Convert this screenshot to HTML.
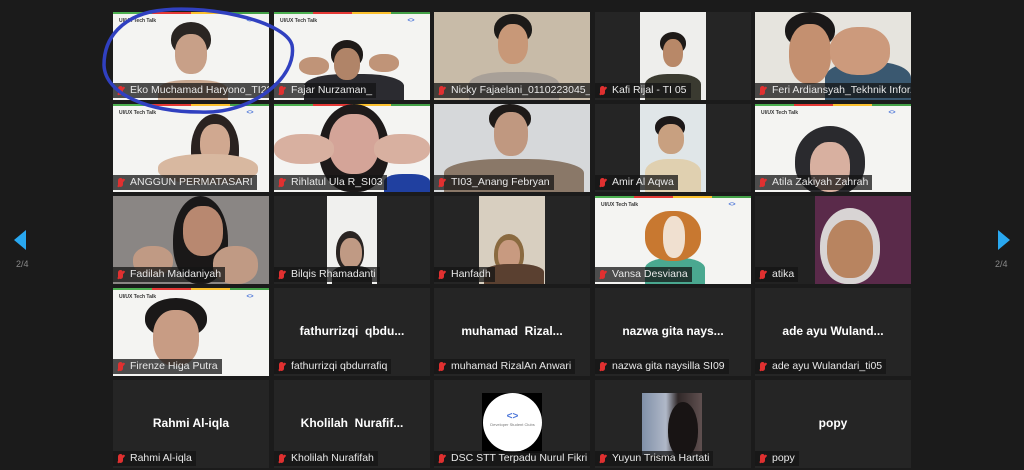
<!DOCTYPE html>
<html><head><meta charset="utf-8"><style>
*{margin:0;padding:0;box-sizing:border-box}
body{width:1024px;height:470px;background:#1b1b1b;overflow:hidden;position:relative;font-family:"Liberation Sans",sans-serif}
.t{position:absolute;width:156px;height:88px;background:#252525;overflow:hidden}
.wb{background:#f4f4f2}
.wb::before{content:"";position:absolute;left:0;right:0;top:0;height:2px;background:linear-gradient(90deg,#4caf50 0 25%,#e53935 25% 50%,#fbc02d 50% 75%,#43a047 75%)}
.tt{position:absolute;left:6px;top:6px;font-size:5px;font-weight:bold;color:#333}
.lg{position:absolute;right:8px;top:6px;width:22px;height:8px;font-size:6px;color:#4a74d8;text-align:center;font-weight:bold}
.lb{position:absolute;left:0;bottom:2px;height:15px;background:rgba(20,20,20,.75);color:#e8e8e8;font-size:10.5px;line-height:15px;padding:0 4px 0 17px;white-space:nowrap}
.lb::before{content:"";position:absolute;left:5px;top:3px;width:5px;height:9px;background:#e03030;border-radius:3px}
.lb::after{content:"";position:absolute;left:3px;top:7px;width:10px;height:1.5px;background:#e03030;transform:rotate(-50deg)}
.nm{position:absolute;left:0;right:0;top:36px;text-align:center;color:#fff;font-weight:bold;font-size:12px}
.h{position:absolute;border-radius:50% 50% 45% 45%}
.f{position:absolute;border-radius:45%}
.b{position:absolute;border-radius:40% 40% 0 0}
.v{position:absolute}
.arr{position:absolute;width:0;height:0;border-top:10px solid transparent;border-bottom:10px solid transparent}
.pg{position:absolute;color:#888;font-size:9px}
</style></head><body>
<div class="arr" style="left:14px;top:230px;border-right:12px solid #29a8f0"></div>
<div class="pg" style="left:16px;top:259px">2/4</div>
<div class="arr" style="left:998px;top:230px;border-left:12px solid #29a8f0"></div>
<div class="pg" style="left:995px;top:259px">2/4</div>

<!-- Row 1 -->
<div class="t wb" style="left:113px;top:12px"><div class="tt">UI/UX Tech Talk</div><div class="lg">&lt;&gt;</div>
<div class="b" style="left:45px;top:68px;width:70px;height:25px;background:#c9a890"></div>
<div class="h" style="left:58px;top:10px;width:40px;height:34px;background:#2a2522"></div>
<div class="f" style="left:62px;top:22px;width:32px;height:40px;background:#c8a088"></div>
<div class="lb">Eko Muchamad Haryono_TI2?</div></div>
<div class="t wb" style="left:274px;top:12px"><div class="tt">UI/UX Tech Talk</div><div class="lg">&lt;&gt;</div>
<div class="b" style="left:30px;top:62px;width:100px;height:30px;background:#2b2b30"></div>
<div class="h" style="left:57px;top:28px;width:32px;height:28px;background:#1e1a18"></div>
<div class="f" style="left:60px;top:36px;width:26px;height:32px;background:#b08468"></div>
<div class="f" style="left:25px;top:45px;width:30px;height:18px;background:#c09478"></div>
<div class="f" style="left:95px;top:42px;width:30px;height:18px;background:#c09478"></div>
<div class="lb">Fajar Nurzaman_</div></div>
<div class="t" style="left:434px;top:12px;background:#c8bba8">
<div class="b" style="left:35px;top:60px;width:90px;height:30px;background:#a8a098"></div>
<div class="h" style="left:60px;top:2px;width:38px;height:30px;background:#1c1a18"></div>
<div class="f" style="left:64px;top:12px;width:30px;height:40px;background:#c89878"></div>
<div class="lb">Nicky Fajaelani_0110223045_...</div></div>
<div class="t" style="left:595px;top:12px"><div class="v" style="left:45px;top:0;width:66px;height:88px;background:#eeeeec"></div>
<div class="b" style="left:50px;top:62px;width:56px;height:26px;background:#3a3a30"></div>
<div class="h" style="left:65px;top:20px;width:26px;height:22px;background:#1e1a18"></div>
<div class="f" style="left:68px;top:27px;width:20px;height:28px;background:#b88868"></div>
<div class="lb">Kafi Rijal - TI 05</div></div>
<div class="t" style="left:755px;top:12px;background:#e6e4de">
<div class="b" style="left:70px;top:50px;width:86px;height:40px;background:#3a5870"></div>
<div class="h" style="left:30px;top:0;width:50px;height:36px;background:#1a1818"></div>
<div class="f" style="left:34px;top:12px;width:42px;height:60px;background:#c49070"></div>
<div class="f" style="left:75px;top:15px;width:60px;height:48px;background:#cc9a7c"></div>
<div class="lb">Feri Ardiansyah_Tekhnik Infor...</div></div>

<!-- Row 2 -->
<div class="t wb" style="left:113px;top:104px"><div class="tt">UI/UX Tech Talk</div><div class="lg">&lt;&gt;</div>
<div class="h" style="left:78px;top:10px;width:48px;height:70px;background:#2a2220"></div>
<div class="f" style="left:87px;top:20px;width:30px;height:40px;background:#d0a890"></div>
<div class="f" style="left:45px;top:50px;width:100px;height:30px;background:#d8b8a0"></div>
<div class="lb">ANGGUN PERMATASARI</div></div>
<div class="t wb" style="left:274px;top:104px">
<div class="h" style="left:45px;top:0;width:70px;height:88px;background:#1e1a1a"></div>
<div class="f" style="left:55px;top:10px;width:50px;height:60px;background:#d4a498"></div>
<div class="f" style="left:0;top:30px;width:60px;height:30px;background:#d8b0a0"></div>
<div class="f" style="left:100px;top:30px;width:56px;height:30px;background:#d8b0a0"></div>
<div class="b" style="left:110px;top:70px;width:46px;height:18px;background:#2040a0"></div>
<div class="lb">Rihlatul Ula R_SI03</div></div>
<div class="t" style="left:434px;top:104px;background:#d6d8da">
<div class="h" style="left:55px;top:0;width:42px;height:28px;background:#1e1a18"></div>
<div class="f" style="left:60px;top:8px;width:34px;height:44px;background:#c09880"></div>
<div class="b" style="left:10px;top:55px;width:140px;height:35px;background:#8a7868"></div>
<div class="lb">TI03_Anang Febryan</div></div>
<div class="t" style="left:595px;top:104px"><div class="v" style="left:45px;top:0;width:66px;height:88px;background:#e0e6e8"></div>
<div class="b" style="left:50px;top:55px;width:56px;height:33px;background:#e0d0b0"></div>
<div class="h" style="left:60px;top:12px;width:30px;height:22px;background:#1c1818"></div>
<div class="f" style="left:63px;top:20px;width:26px;height:30px;background:#c8a080"></div>
<div class="lb">Amir Al Aqwa</div></div>
<div class="t wb" style="left:755px;top:104px"><div class="tt">UI/UX Tech Talk</div><div class="lg">&lt;&gt;</div>
<div class="h" style="left:40px;top:22px;width:70px;height:70px;background:#2a2a2e"></div>
<div class="f" style="left:55px;top:38px;width:40px;height:50px;background:#d8b0a0"></div>
<div class="lb">Atila Zakiyah Zahrah</div></div>

<!-- Row 3 -->
<div class="t" style="left:113px;top:196px;background:#8a8684">
<div class="h" style="left:60px;top:0;width:55px;height:88px;background:#1a1818"></div>
<div class="f" style="left:70px;top:10px;width:40px;height:50px;background:#b88870"></div>
<div class="f" style="left:20px;top:50px;width:40px;height:30px;background:#c09a84"></div>
<div class="f" style="left:100px;top:50px;width:45px;height:38px;background:#c09a84"></div>
<div class="lb">Fadilah Maidaniyah</div></div>
<div class="t" style="left:274px;top:196px"><div class="v" style="left:53px;top:0;width:50px;height:88px;background:#f0f0ee"></div>
<div class="h" style="left:62px;top:35px;width:28px;height:40px;background:#2a2422"></div>
<div class="f" style="left:66px;top:42px;width:22px;height:30px;background:#c09a84"></div>
<div class="b" style="left:58px;top:70px;width:40px;height:18px;background:#202020"></div>
<div class="lb">Bilqis Rhamadanti</div></div>
<div class="t" style="left:434px;top:196px"><div class="v" style="left:45px;top:0;width:66px;height:88px;background:#d8cfc0"></div>
<div class="h" style="left:60px;top:38px;width:30px;height:40px;background:#8a6a40"></div>
<div class="f" style="left:64px;top:44px;width:22px;height:30px;background:#c89a80"></div>
<div class="b" style="left:50px;top:68px;width:60px;height:20px;background:#5a4030"></div>
<div class="lb">Hanfadh</div></div>
<div class="t wb" style="left:595px;top:196px"><div class="tt">UI/UX Tech Talk</div><div class="lg">&lt;&gt;</div>
<div class="b" style="left:50px;top:62px;width:60px;height:26px;background:#4aa890"></div>
<div class="f" style="left:50px;top:15px;width:56px;height:50px;background:#c87830"></div>
<div class="f" style="left:68px;top:20px;width:22px;height:42px;background:#f0e0d0"></div>
<div class="lb">Vansa Desviana</div></div>
<div class="t" style="left:755px;top:196px;background:#5a2a4a">
<div class="v" style="left:0;top:0;width:60px;height:88px;background:#222"></div>
<div class="h" style="left:65px;top:12px;width:60px;height:76px;background:#d8d4d4"></div>
<div class="f" style="left:72px;top:24px;width:46px;height:58px;background:#b88460"></div>
<div class="lb">atika</div></div>

<!-- Row 4 -->
<div class="t wb" style="left:113px;top:288px"><div class="tt">UI/UX Tech Talk</div><div class="lg">&lt;&gt;</div>
<div class="h" style="left:32px;top:10px;width:62px;height:40px;background:#1a1818"></div>
<div class="f" style="left:40px;top:22px;width:46px;height:56px;background:#c89c84"></div>
<div class="lb">Firenze Higa Putra</div></div>
<div class="t" style="left:274px;top:288px"><div class="nm">fathurrizqi&nbsp; qbdu...</div><div class="lb">fathurrizqi qbdurrafiq</div></div>
<div class="t" style="left:434px;top:288px"><div class="nm">muhamad&nbsp; Rizal...</div><div class="lb">muhamad RizalAn Anwari</div></div>
<div class="t" style="left:595px;top:288px"><div class="nm">nazwa gita nays...</div><div class="lb">nazwa gita naysilla SI09</div></div>
<div class="t" style="left:755px;top:288px"><div class="nm">ade ayu Wuland...</div><div class="lb">ade ayu Wulandari_ti05</div></div>

<!-- Row 5 -->
<div class="t" style="left:113px;top:380px"><div class="nm">Rahmi Al-iqla</div><div class="lb">Rahmi Al-iqla</div></div>
<div class="t" style="left:274px;top:380px"><div class="nm">Kholilah&nbsp; Nurafif...</div><div class="lb">Kholilah Nurafifah</div></div>
<div class="t" style="left:434px;top:380px"><div class="v" style="left:48px;top:13px;width:60px;height:60px;background:#000"></div>
<div class="v" style="left:49px;top:13px;width:59px;height:59px;border-radius:50%;background:#fff;text-align:center;font-size:10px;color:#4a74d8;font-weight:bold;padding-top:18px">&lt;&gt;<div style="font-size:4px;color:#777;font-weight:normal">Developer Student Clubs</div></div>
<div class="lb">DSC STT Terpadu Nurul Fikri</div></div>
<div class="t" style="left:595px;top:380px"><div class="v" style="left:47px;top:13px;width:60px;height:62px;background:linear-gradient(90deg,#8090a8,#b0b8c8 40%,#302828 60%,#605050)"></div>
<div class="h" style="left:73px;top:22px;width:30px;height:55px;background:#181414"></div>
<div class="lb">Yuyun Trisma Hartati</div></div>
<div class="t" style="left:755px;top:380px"><div class="nm">popy</div><div class="lb">popy</div></div>

<svg style="position:absolute;left:0;top:0" width="1024" height="470"><path d="M150 12 C200 2 285 20 292 45 C298 78 250 115 200 112 C150 112 105 95 104 65 C104 35 125 18 150 12 Z" fill="none" stroke="#3040c0" stroke-width="3.5"/></svg>
</body></html>
